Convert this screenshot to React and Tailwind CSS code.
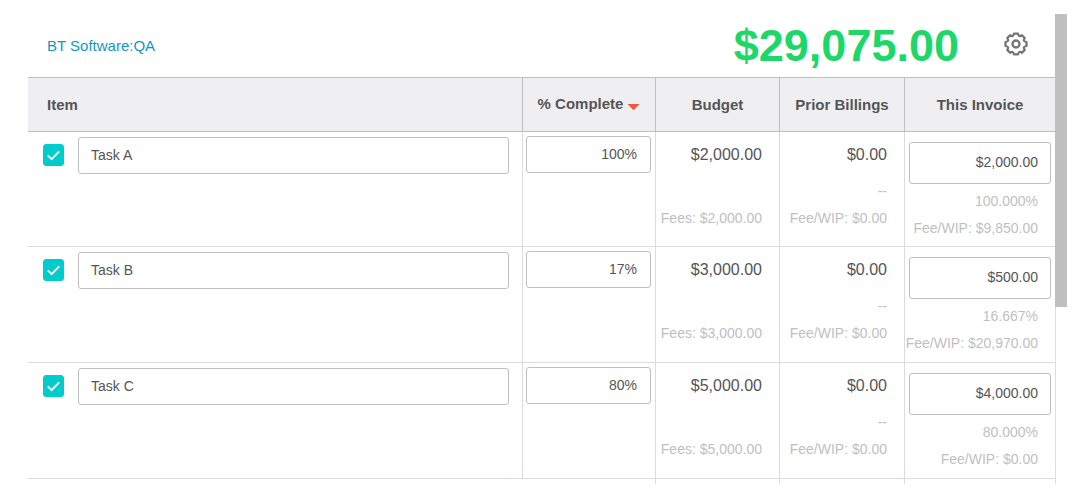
import React, { useState } from "react";

const initialTasks = [
  {
    id: 1,
    name: "Task A",
    complete: "100%",
    budget: "$2,000.00",
    prior: "$0.00",
    priorFee: "$0.00",
    invoice: "$2,000.00",
    invoicePct: "100.000%",
    invoiceFee: "$9,850.00",
  },
  {
    id: 2,
    name: "Task B",
    complete: "17%",
    budget: "$3,000.00",
    prior: "$0.00",
    priorFee: "$0.00",
    invoice: "$500.00",
    invoicePct: "16.667%",
    invoiceFee: "$20,970.00",
  },
  {
    id: 3,
    name: "Task C",
    complete: "80%",
    budget: "$5,000.00",
    prior: "$0.00",
    priorFee: "$0.00",
    invoice: "$4,000.00",
    invoicePct: "80.000%",
    invoiceFee: "$0.00",
  },
];

const GearIcon = () => (
  <svg
    viewBox="-12 -12 24 24"
    className="h-6 w-6"
    fill="none"
    stroke="currentColor"
    strokeWidth="2.3"
    strokeLinejoin="round"
  >
    <path d="M-2 -10.3 L2 -10.3 Q2.6 -8.2 3.3 -8 Q4.2 -7.6 5.9 -8.7 L8.7 -5.9 Q7.6 -4.2 8 -3.3 Q8.2 -2.6 10.5 -2 L10.5 2 Q8.2 2.6 8 3.3 Q7.6 4.2 8.7 5.9 L5.9 8.7 Q4.2 7.6 3.3 8 Q2.6 8.2 2 10.3 L-2 10.3 Q-2.6 8.2 -3.3 8 Q-4.2 7.6 -5.9 8.7 L-8.7 5.9 Q-7.6 4.2 -8 3.3 Q-8.2 2.6 -10.5 2 L-10.5 -2 Q-8.2 -2.6 -8 -3.3 Q-7.6 -4.2 -8.7 -5.9 L-5.9 -8.7 Q-4.2 -7.6 -3.3 -8 Q-2.6 -8.2 -2 -10.3 Z" />
    <circle r="3.5" />
  </svg>
);

const Checkbox = ({ checked, onChange, label }) => (
  <span className="relative flex shrink-0">
    <input
      type="checkbox"
      aria-label={label}
      checked={checked}
      onChange={onChange}
      className="peer h-[22px] w-[21px] cursor-pointer appearance-none rounded-[3px] border border-[#bfbfbf] bg-white checked:border-[#00cccc] checked:bg-[#00cccc]"
    />
    <svg
      viewBox="0 0 21 22"
      className="pointer-events-none absolute inset-0 hidden h-full w-full peer-checked:block"
      fill="none"
      stroke="white"
      strokeWidth="2"
    >
      <path d="M4.8 11.4 L8.6 15.2 L16.2 7.4" />
    </svg>
  </span>
);

const TaskRow = ({ task, onChange }) => {
  const [checked, setChecked] = useState(true);

  return (
    <tr className="h-[116px] align-top first:h-[115px]">
      <td className="border-r border-b border-[#d9d9e8] pt-[5px] pr-[13px] pl-[15px]">
        <div className="flex gap-3.5">
          <div className="pt-[7px]">
            <Checkbox
              checked={checked}
              onChange={(e) => setChecked(e.target.checked)}
              label={`Include ${task.name}`}
            />
          </div>
          <input
            type="text"
            aria-label="Item name"
            value={task.name}
            onChange={(e) => onChange("name", e.target.value)}
            className="h-[37px] w-full min-w-0 rounded-[3px] border border-[#bfbfbf] px-3 pb-0.5 text-sm"
          />
        </div>
      </td>
      <td className="border-r border-b border-[#d9d9e8] pt-1 pr-1 pl-[3px]">
        <input
          type="text"
          aria-label={`${task.name} % complete`}
          value={task.complete}
          onChange={(e) => onChange("complete", e.target.value)}
          className="block h-[37px] w-full rounded-[3px] border border-[#bfbfbf] px-[13px] pb-0.5 text-right text-sm"
        />
      </td>
      <td className="border-r border-b border-[#d9d9e8] pt-[11px] pr-[17px] text-right whitespace-nowrap">
        <p className="text-base leading-6">{task.budget}</p>
        <p className="mt-[38px] text-sm leading-[27px] text-[#bfbfbf]">Fees: {task.budget}</p>
      </td>
      <td className="border-r border-b border-[#d9d9e8] pt-[11px] pr-[17px] text-right whitespace-nowrap">
        <p className="text-base leading-6">{task.prior}</p>
        <div className="mt-[11px] text-sm leading-[27px] text-[#bfbfbf]">
          <p>--</p>
          <p>Fee/WIP: {task.priorFee}</p>
        </div>
      </td>
      <td className="border-b border-[#d9d9e8] pt-2.5 pr-1 pl-1 text-right whitespace-nowrap">
        <input
          type="text"
          aria-label={`${task.name} this invoice`}
          value={task.invoice}
          onChange={(e) => onChange("invoice", e.target.value)}
          className="block h-[42px] w-full rounded-[3px] border border-[#bfbfbf] px-3 pb-0.5 text-right text-sm"
        />
        <div className="mt-1 flex flex-col items-end pr-[13px] text-sm leading-[27px] text-[#bfbfbf]">
          <p>{task.invoicePct}</p>
          <p>Fee/WIP: {task.invoiceFee}</p>
        </div>
      </td>
    </tr>
  );
};

const App = () => {
  const [tasks, setTasks] = useState(initialTasks);

  const updateTask = (id, field, value) => {
    setTasks(tasks.map((t) => (t.id === id ? { ...t, [field]: value } : t)));
  };

  return (
    <main className="flex bg-white pt-3.5 pr-2 pl-7 font-['Liberation_Sans',Arial,sans-serif] text-[#555]">
      <div className="min-w-0 flex-1">
        {/* Project and total */}
        <header className="flex h-[63px] items-center justify-between pr-[27px] pl-[19px]">
          <a href="#project" className="pt-0.5 text-[15px] text-[#1596c4]">
            BT Software:QA
          </a>
          <div className="flex items-center gap-[45px]">
            <span className="text-[45px] leading-none font-bold text-[#1ed769]">$29,075.00</span>
            <button type="button" aria-label="Settings" className="cursor-pointer pb-1 text-[#757575]">
              <GearIcon />
            </button>
          </div>
        </header>

        {/* Billing items */}
        <table className="w-full table-fixed border-separate border-spacing-0">
          <colgroup>
            <col />
            <col className="w-[133px]" />
            <col className="w-[124px]" />
            <col className="w-[125px]" />
            <col className="w-[150px]" />
          </colgroup>
          <thead>
            <tr className="h-[55px] bg-[#efeff1] text-[15px]">
              <th className="border-y border-r border-[#bfbfbf] pt-0.5 pl-[19px] text-left">Item</th>
              <th className="border-y border-r border-[#bfbfbf]">
                <button type="button" className="inline-flex cursor-pointer items-center gap-1 font-bold">
                  % Complete
                  <svg viewBox="0 0 13 7" className="mt-1.5 h-[7px] w-[13px] fill-[#f0593e]">
                    <path d="M0.5 0 H12.5 L6.5 6.2 Z" />
                  </svg>
                </button>
              </th>
              <th className="border-y border-r border-[#bfbfbf] pt-0.5">Budget</th>
              <th className="border-y border-r border-[#bfbfbf] pt-0.5">Prior Billings</th>
              <th className="border-y border-[#bfbfbf] pt-0.5">This Invoice</th>
            </tr>
          </thead>
          <tbody>
            {tasks.map((task) => (
              <TaskRow
                key={task.id}
                task={task}
                onChange={(field, value) => updateTask(task.id, field, value)}
              />
            ))}
          </tbody>
          <tfoot>
            <tr className="h-[5px]">
              <td colSpan={2} className="border-r border-[#d9d9e8]" />
              <td className="border-r border-[#d9d9e8]" />
              <td className="border-r border-[#d9d9e8]" />
              <td />
            </tr>
          </tfoot>
        </table>
      </div>

      {/* Scrollbar */}
      <div className="flex w-3 flex-col">
        <div className="h-[293px] bg-[#bfbfbf]" />
        <div className="flex-1 border-l border-[#dedede]" />
      </div>
    </main>
  );
};

export default App;
